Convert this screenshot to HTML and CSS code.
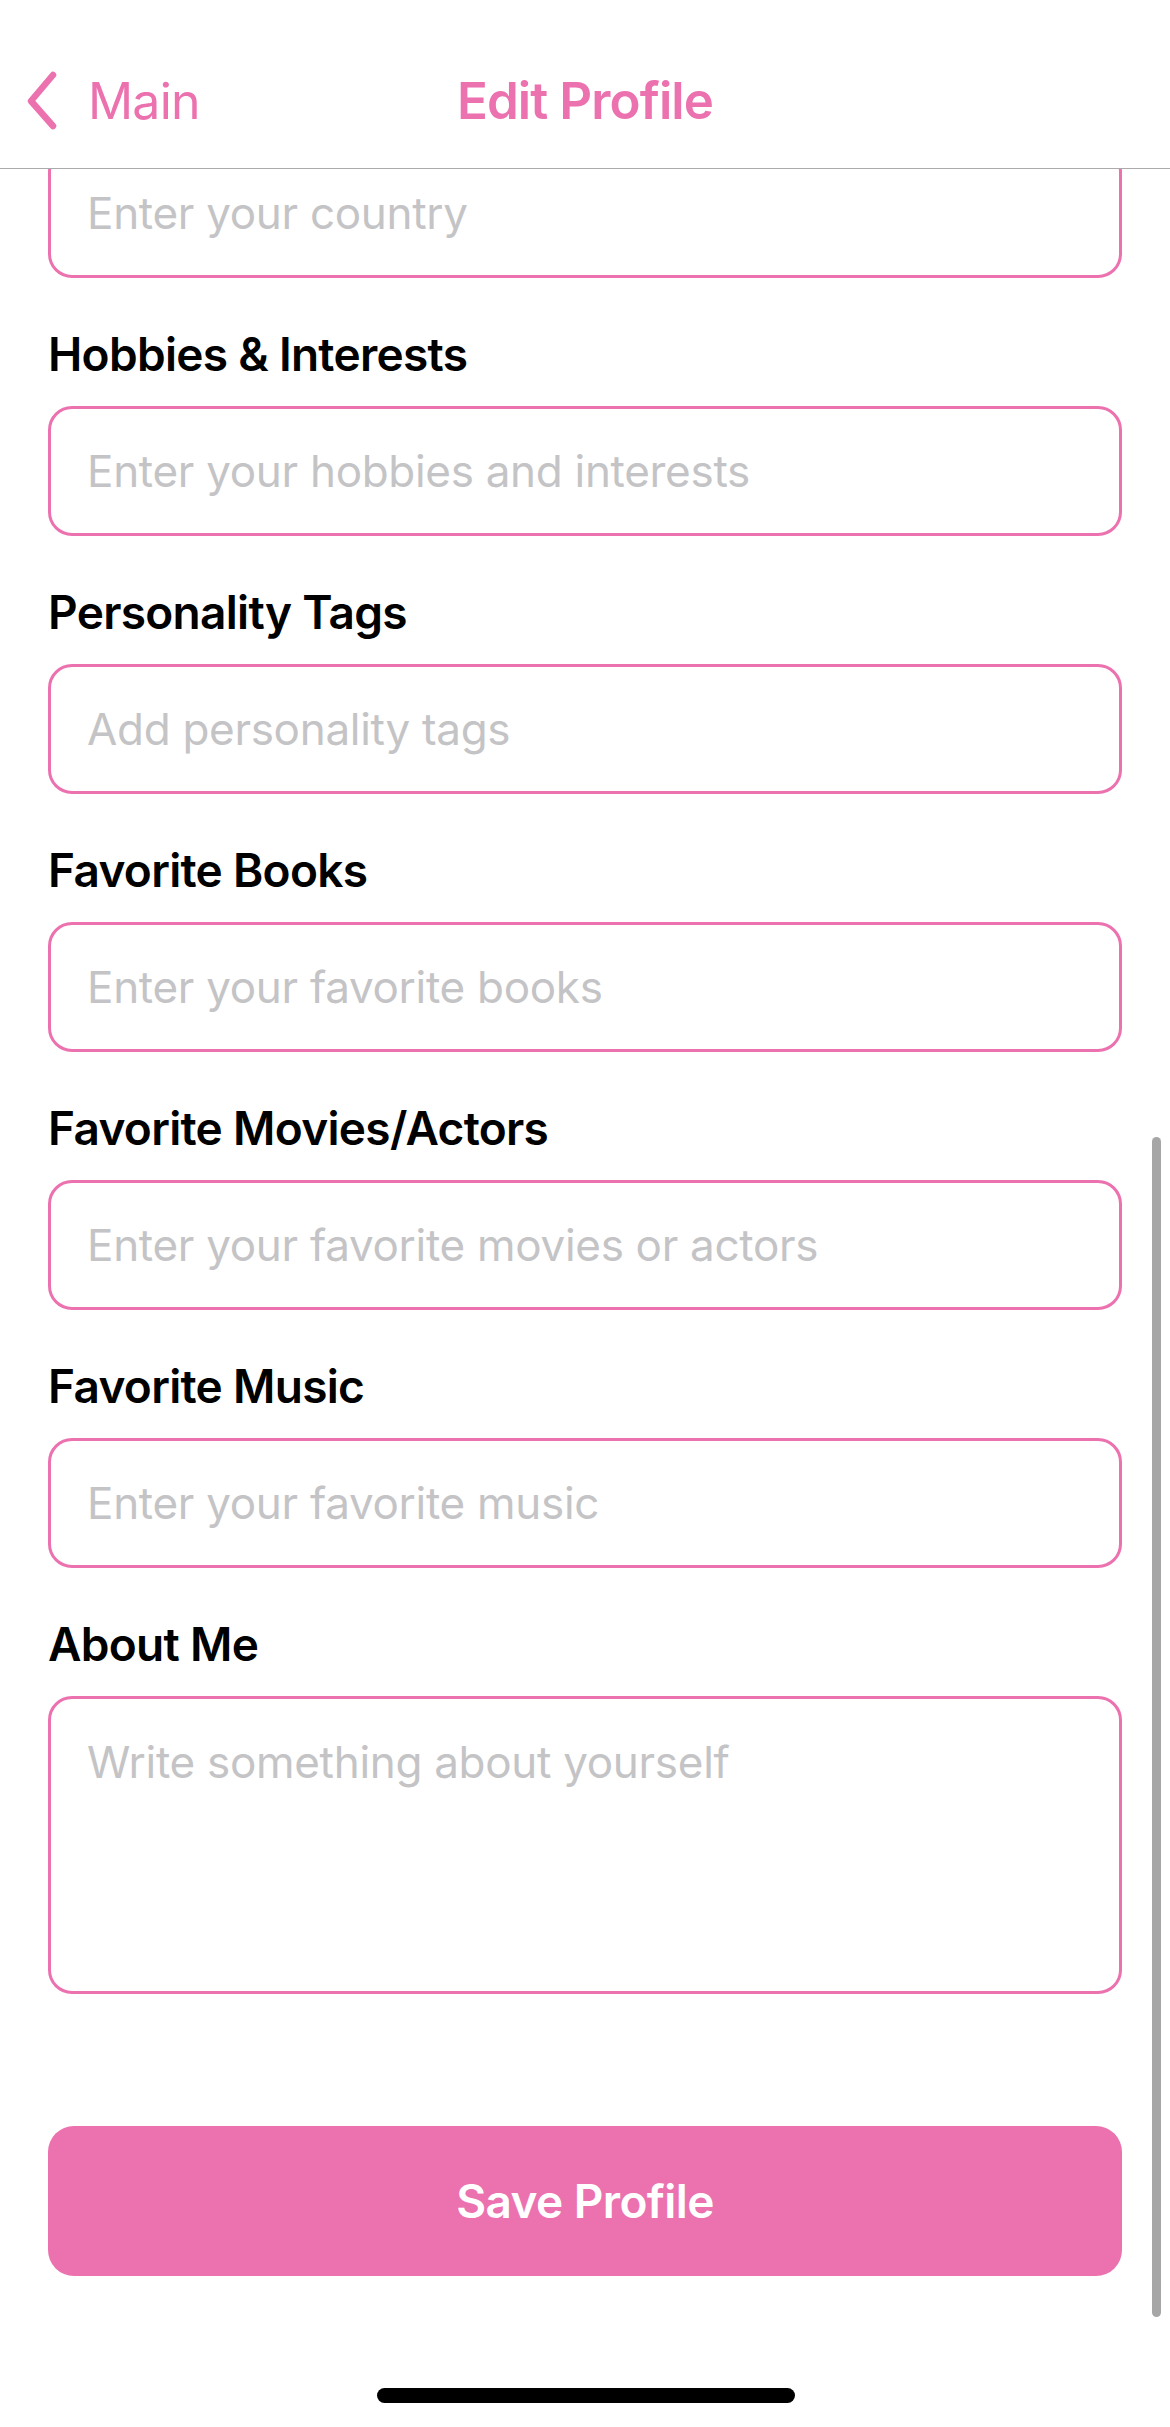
FILE: index.html
```html
<!DOCTYPE html>
<html lang="en">
<head>
<meta charset="utf-8">
<title>Edit Profile</title>
<link rel="stylesheet" href="styles.css">
</head>
<body>
<div class="screen">
  <header class="navbar">
    <div class="nav-row">
      <a class="back" href="#">
        <svg class="chevron" width="40" height="60" viewBox="0 0 40 60" aria-hidden="true">
          <path d="M31 16 L9 42 L31 67" transform="translate(0,-12)" fill="none" stroke="currentColor" stroke-width="6.5" stroke-linecap="round" stroke-linejoin="round"/>
        </svg>
        <span class="back-label">Main</span>
      </a>
      <h1 class="title">Edit Profile</h1>
      <span class="nav-spacer"></span>
    </div>
  </header>

  <main class="content">
    <form class="form">
      <div class="group first">
        <input class="input" type="text" placeholder="Enter your country">
      </div>
      <div class="group">
        <label class="label">Hobbies &amp; Interests</label>
        <input class="input" type="text" placeholder="Enter your hobbies and interests">
      </div>
      <div class="group">
        <label class="label">Personality Tags</label>
        <input class="input" type="text" placeholder="Add personality tags">
      </div>
      <div class="group">
        <label class="label">Favorite Books</label>
        <input class="input" type="text" placeholder="Enter your favorite books">
      </div>
      <div class="group">
        <label class="label">Favorite Movies/Actors</label>
        <input class="input" type="text" placeholder="Enter your favorite movies or actors">
      </div>
      <div class="group">
        <label class="label">Favorite Music</label>
        <input class="input" type="text" placeholder="Enter your favorite music">
      </div>
      <div class="group">
        <label class="label">About Me</label>
        <textarea class="input textarea" placeholder="Write something about yourself"></textarea>
      </div>
      <button class="save" type="button">Save Profile</button>
    </form>
    <div class="scrollbar"></div>
  </main>
  <div class="home-indicator"></div>
</div>
</body>
</html>
```

FILE: styles.css
```css
* {
  box-sizing: border-box;
}

html, body {
  margin: 0;
  padding: 0;
  background: #ffffff;
}

body {
  width: 1170px;
  height: 2427px;
  overflow: hidden;
  font-family: Inter, "Noto Sans", "Liberation Sans", sans-serif;
  color: #000000;
}

.screen {
  position: relative;
  width: 1170px;
  height: 2427px;
  display: flex;
  flex-direction: column;
  background: #ffffff;
}

/* Navigation bar */
.navbar {
  height: 169px;
  flex: none;
  padding-top: 69px;
  border-bottom: 1px solid #ababab;
  background: #ffffff;
  position: relative;
  z-index: 2;
}

.nav-row {
  display: grid;
  grid-template-columns: 1fr auto 1fr;
  align-items: center;
  height: 64px;
}

.back {
  display: flex;
  align-items: center;
  gap: 26px;
  padding-left: 22px;
  color: #ec71af;
  text-decoration: none;
  font-size: 50px;
  line-height: 64px;
  letter-spacing: -0.8px;
}

.chevron {
  flex: none;
}

.title {
  margin: 0;
  font-size: 51px;
  line-height: 64px;
  font-weight: 600;
  color: #ec71af;
  letter-spacing: -0.9px;
}

/* Content */
.content {
  position: relative;
  flex: 1;
  overflow: hidden;
}

.form {
  display: flex;
  flex-direction: column;
  padding: 0 48px;
  margin-top: -21px;
}

.group {
  display: flex;
  flex-direction: column;
  margin-bottom: 47px;
}

.label {
  font-size: 46px;
  line-height: 58px;
  font-weight: 600;
  margin-bottom: 23px;
  letter-spacing: -0.7px;
}

.input {
  display: block;
  width: 100%;
  height: 130px;
  margin: 0;
  padding: 0 36px;
  border: 3px solid #ec71af;
  border-radius: 24px;
  background: #ffffff;
  font-family: Inter, "Noto Sans", "Liberation Sans", sans-serif;
  font-size: 44px;
  color: #000000;
  outline: none;
  letter-spacing: -0.3px;
}

.input::placeholder {
  color: #c4c4c6;
  opacity: 1;
}

.textarea {
  height: 298px;
  padding: 36px;
  resize: none;
  line-height: 54px;
}

.save {
  margin-top: 85px;
  height: 150px;
  width: 100%;
  border: none;
  border-radius: 26px;
  background: #ec71af;
  color: #ffffff;
  font-family: Inter, "Noto Sans", "Liberation Sans", sans-serif;
  font-size: 46px;
  font-weight: 600;
  letter-spacing: -0.6px;
}

/* Overlays */
.scrollbar {
  position: absolute;
  left: 1152px;
  top: 968px;
  width: 9px;
  height: 1180px;
  border-radius: 5px;
  background: #a6a6a6;
}

.home-indicator {
  position: absolute;
  left: 377px;
  top: 2388px;
  width: 418px;
  height: 15px;
  border-radius: 8px;
  background: #000000;
}
```
